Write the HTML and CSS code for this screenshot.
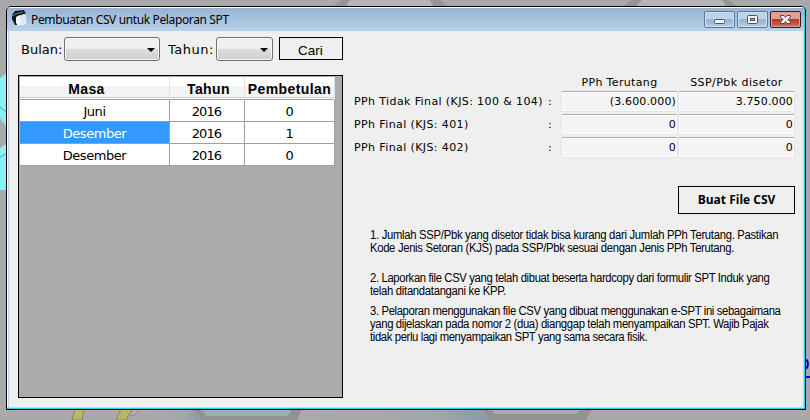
FILE: index.html
```html
<!DOCTYPE html>
<html lang="id">
<head>
<meta charset="utf-8">
<title>Pembuatan CSV untuk Pelaporan SPT</title>
<link rel="stylesheet" href="styles.css">
</head>
<body>
<svg class="backdrop" width="810" height="420" viewBox="0 0 810 420">
  <defs><linearGradient id="blue" x1="0" x2="1"><stop offset="0" stop-color="#aaa"/><stop offset=".7" stop-color="#a4a7aa"/><stop offset="1" stop-color="#8799ab"/></linearGradient></defs>
  <path d="M332 7L342 0H440L448 7Z" fill="#949494"/><path d="M345 7L350 0H430L434 7Z" fill="#b5b5b5"/>
  <path d="M622 7L632 0H728L738 7Z" fill="#949494"/><path d="M635 7L642 0H722L727 7Z" fill="#b5b5b5"/>
  <path d="M0 78L6 74V126L0 118Z M0 148L6 144V190H0Z" fill="#86f3f3"/>
  <path d="M0 107L6 112M0 157L6 154" stroke="#59a5a5" fill="none"/>
  <path d="M72 420L75 409H84L82 420Z M116 420L121 409H132L126 420Z" fill="#bab765" stroke="#858565"/>
  <path d="M130 416Q138 415 138 409" fill="#b9b9b9" stroke="#858585"/>
  <path d="M140 420V409H193L201 420Z" fill="url(#blue)"/>
  <path d="M193 409H302L297 420H202Z" fill="#929292"/><path d="M202 409H292L288 416H206Z" fill="#9bacb2"/>
  <path d="M302 409H480L489 420H297Z" fill="url(#blue)"/>
  <path d="M482 409H592L586 420H489Z" fill="#929292"/><path d="M491 409H582L576 414H495Z" fill="#9fb0b5"/>
</svg>
<span class="backlink">o</span>
<main class="window">
  <header class="titlebar">
    <svg class="appicon" width="16" height="18" viewBox="0 0 16 18"><path d="M1 5L4 1L13 0L15 4L6 7L6 15L4 15L1 9Z" fill="#101719"/><path d="M1 6L5 4M5 4L12 2" stroke="#75828a"/><path d="M5 7L9 5L12 14L7 16L5 13Z" fill="#f5f7ff"/><path d="M8 6L14 4L15 13L13 15L9 14Z" fill="#dfe4ff" stroke="#fff" stroke-width=".5"/></svg>
    <h1>Pembuatan CSV untuk Pelaporan SPT</h1>
    <div class="controls">
      <button aria-label="Minimize"><svg width="29" height="15"><rect x="9.5" y="7.5" width="10" height="4" rx="1" fill="#f4f4f4" stroke="#4e5368"/></svg></button>
      <button aria-label="Maximize"><svg width="29" height="15"><rect x="9.5" y="3.500" width="10" height="8" rx="1" fill="#f4f4f4" stroke="#4e5368"/><rect x="12.5" y="6.500" width="4" height="2" fill="#91aaca" stroke="#4e5368"/></svg></button>
      <button class="close" aria-label="Close"><svg width="29" height="15"><path d="M9.500 3.500H13L14.500 5.500L16 3.500H19.500V5L17 7.500L19.500 10V11.500H16L14.500 9.500L13 11.500H9.500V10L12 7.500L9.500 5Z" fill="#f4f4f4" stroke="#56465a"/></svg></button>
    </div>
  </header>
  <div class="client">
    <section class="left">
      <div class="filters">
        <span class="lbl bulan">Bulan:</span><span class="combo month"></span>
        <span class="lbl tahun">Tahun:</span><span class="combo year"></span>
        <button class="cari"><span>Cari</span></button>
      </div>
      <div class="gridbox">
        <div class="row head"><b class="h1c">Masa</b><b class="h2c">Tahun</b><b class="h3c">Pembetulan</b></div>
        <div class="row"><span>Juni</span><span>2016</span><span>0</span></div>
        <div class="row"><span class="sel">Desember</span><span>2016</span><span>1</span></div>
        <div class="row"><span>Desember</span><span>2016</span><span>0</span></div>
      </div>
    </section>
    <section class="right">
      <div class="totals">
        <span></span><span></span><span class="colhead t1">PPh Terutang</span><span class="colhead t2">SSP/Pbk disetor</span>
        <span class="name">PPh Tidak Final (KJS: 100 &amp; 104)</span><span class="colon">:</span><span class="field">(3.600.000)</span><span class="field">3.750.000</span>
        <span class="name">PPh Final (KJS: 401)</span><span class="colon">:</span><span class="field">0</span><span class="field">0</span>
        <span class="name">PPh Final (KJS: 402)</span><span class="colon">:</span><span class="field">0</span><span class="field">0</span>
      </div>
      <button class="make"><span>Buat File CSV</span></button>
      <div class="notes">
        <p><span class="n1">1. Jumlah SSP/Pbk yang disetor tidak bisa kurang dari Jumlah PPh Terutang. Pastikan</span><span class="n2">Kode Jenis Setoran (KJS) pada SSP/Pbk sesuai dengan Jenis PPh Terutang.</span></p>
        <p class="p2"><span class="n3">2. Laporkan file CSV yang telah dibuat beserta hardcopy dari formulir SPT Induk yang</span><span class="n4">telah ditandatangani ke KPP.</span></p>
        <p class="p3"><span class="n5">3. Pelaporan menggunakan file CSV yang dibuat menggunakan e-SPT ini sebagaimana</span><span class="n6">yang dijelaskan pada nomor 2 (dua) dianggap telah menyampaikan SPT. Wajib Pajak</span><span class="n7">tidak perlu lagi menyampaikan SPT yang sama secara fisik.</span></p>
      </div>
    </section>
  </div>
</main>
</body>
</html>
```
FILE: styles.css
```css
* { box-sizing: border-box; }
body { margin: 0; width: 810px; height: 420px; overflow: hidden; background: #a9a9a9; position: relative; color: #000; font-family: "DejaVu Sans", Verdana, sans-serif; }
button { padding: 0; margin: 0; font: inherit; color: inherit; }
.backdrop { position: absolute; left: 0; top: 0; }
.backlink { position: absolute; left: 797px; top: 350px; font: 21px/26px "DejaVu Sans", sans-serif; color: #0000e0; text-decoration: underline 2px; text-underline-offset: 6px; }
.window { position: relative; margin: 6px 0 0 6px; width: 800px; height: 404px; display: flex; flex-direction: column; border: 1px solid #000; border-radius: 5px 5px 0 0; background: linear-gradient(90deg, #fff 0 1px, #b9d1ea 1px 2px, #efefef 2px 796px, #b9d1ea 796px 797px, #35cdee 797px); overflow: hidden; }
.titlebar { height: 24px; flex: none; display: flex; align-items: center; padding: 0 3px 0 4px; border-top: 1px solid #fff; border-right: 1px solid #35cdee; background: linear-gradient(#98b4d2, #b9d1ea); }
.appicon { margin-top: -1px; }
h1 { margin: 0 0 0 4px; flex: 1; font: 12px/18px "Noto Sans", sans-serif; letter-spacing: -.37px; white-space: nowrap; }
.controls { display: flex; gap: 2px; }
.controls button { width: 31px; height: 17px; border: 1px solid #5e7592; border-radius: 2px; box-shadow: inset 0 0 0 1px #d0e1f2; background: linear-gradient(#bfd3e8 0 48%, #98b3d1 50%, #b5cfe8); }
.controls svg { display: block; }
.controls .close { border-color: #431422; box-shadow: inset 0 0 0 1px #dda096; background: linear-gradient(#dba298 0 45%, #b53923 50%, #d3705a); }
.client { flex: 1; display: flex; padding: 6px 0 0 11px; border-bottom: 1px solid #25cbe4; box-shadow: inset 0 -1px #c1d9ef; }
.left { width: 325px; flex: none; }
.filters { display: flex; height: 24px; padding-left: 3px; font-size: 13px; line-height: 25px; }
.lbl { flex: none; white-space: nowrap; }
.bulan { width: 43px; }
.tahun { width: 48px; margin-left: 8px; letter-spacing: .5px; }
.combo { flex: none; height: 24px; border: 1px solid #707070; border-radius: 3px; box-shadow: inset 0 0 0 1px #f7f7f7; background: linear-gradient(#efefef 0 50%, #dddddd 50%, #cfcfcf); display: flex; align-items: center; justify-content: flex-end; padding-right: 4px; }
.combo::after { content: ""; border: 4px solid transparent; border-top-color: #000; border-bottom: 0; margin-top: 2px; }
.month { width: 96px; }
.year { width: 57px; }
.cari { margin-left: 6px; width: 64px; height: 23px; border: 1px solid #000; background: #efefef; font: 13.5px/25px "Liberation Sans", sans-serif; padding-right: 1px; }
.gridbox { margin-top: 14px; height: 323px; border: 1px solid #000; padding: 1px; background: #ababab; }
.row { display: grid; grid-template-columns: 150px 75px 90px; height: 22px; width: 315px; font-size: 13px; line-height: 24px; text-align: center; letter-spacing: -.45px; }
.row span { background: #fff; border-right: 1px solid #9f9f9f; border-bottom: 1px solid #9f9f9f; overflow: hidden; }
.row span:nth-child(2) { padding-right: 1px; letter-spacing: -.9px; }
.row .sel { background: #3399ff; color: #fff; }
.row.head { height: 23px; background: linear-gradient(#fff 0 40%, #f1f2f4 42%, #f3f4f6 20px, #d0d0d0 20px 21px, #fff 21px 22px, #9f9f9f 22px); font: bold 14px/24px "Liberation Sans", sans-serif; letter-spacing: .4px; }
.row.head b { border-right: 1px solid #dfe1e4; white-space: nowrap; }
.row.head .h1c { padding-right: 16px; }
.row.head .h2c { padding-left: 3px; }
.right { margin-left: 11px; width: 441px; display: flex; flex-direction: column; font-size: 11px; padding-top: 37px; }
.totals { display: grid; grid-template-columns: 194px 13px 116px 117px; column-gap: 0; grid-template-rows: 17px 23px 23px 23px; white-space: nowrap; }
.totals { grid-template-columns: 194px 13px 117px 117px; }
.colhead { text-align: center; line-height: 17px; }
.t1 { letter-spacing: .35px; }
.t2 { letter-spacing: .45px; }
.name, .colon { line-height: 21px; }
.name { letter-spacing: .39px; }
.field { height: 21px; border: 1px solid #dfe3eb; border-top-color: #a9abb0; border-radius: 2px; box-shadow: inset 0 0 0 1px #fff; background: #f4f4f4; text-align: right; padding-right: 1px; line-height: 19px; letter-spacing: .15px; }
.make { align-self: flex-end; margin-top: 26px; width: 117px; height: 28px; border: 1px solid #000; background: #efefef; font: bold 12px/26px "Open Sans", sans-serif; }
.notes { padding: 15px 0 0 16px; font: 12px/13px "Liberation Sans", sans-serif; white-space: nowrap; letter-spacing: -.31px; }
.notes p { margin: 0; }
.notes span { display: block; width: max-content; transform: scaleX(.94); transform-origin: 0 0; }
.notes .p2 { margin-top: 17px; }
.notes .p3 { margin-top: 7px; }
.n2 { letter-spacing: -.34px; }
.n3, .n6 { letter-spacing: -.37px; }
.n5 { letter-spacing: -.38px; }
.n7 { letter-spacing: -.39px; }
```
